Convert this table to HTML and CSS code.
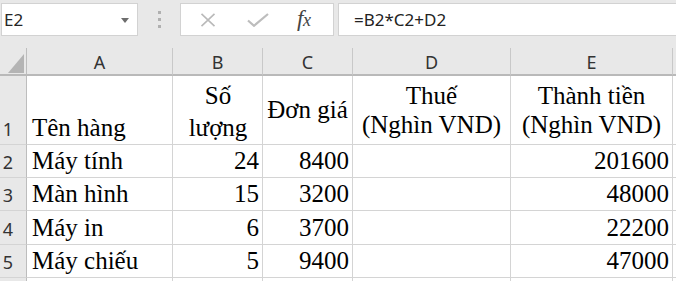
FILE: index.html
```html
<!DOCTYPE html>
<html lang="vi">
<head>
<meta charset="utf-8">
<title>Excel</title>
<link rel="stylesheet" href="styles.css">
</head>
<body>
<div class="app">
  <div class="fbar">
    <div class="namebox">
      <span class="name">E2</span>
      <svg class="dd" width="8" height="5" viewBox="0 0 8 5"><path d="M0 0H8L4 5Z" fill="#6d6d6d"/></svg>
    </div>
    <div class="dots"><i></i><i></i><i></i></div>
    <div class="iconbox">
      <svg class="ic" width="16" height="14" viewBox="0 0 16 14"><path d="M1.5 0.8L14.5 13.2M14.5 0.8L1.5 13.2" stroke="#b9b9b9" stroke-width="1.6" fill="none"/></svg>
      <svg class="ic" width="22" height="14" viewBox="0 0 22 14"><path d="M1 7.5L7 12.8L21 1" stroke="#bdbdbd" stroke-width="2.2" fill="none"/></svg>
      <span class="fx"><span class="f">f</span><span class="x">x</span></span>
    </div>
    <div class="formula">=B2*C2+D2</div>
  </div>
  <div class="sheet">
    <div class="corner"><span class="tri"></span></div>
    <div class="ch">A</div>
    <div class="ch">B</div>
    <div class="ch">C</div>
    <div class="ch">D</div>
    <div class="ch">E</div>
    <div class="ch last"></div>

    <div class="rh">1</div>
    <div class="c left bottom">Tên hàng</div>
    <div class="c center bottom tall">Số<br>lượng</div>
    <div class="c center middle">Đơn giá</div>
    <div class="c center middle">Thuế<br>(Nghìn VND)</div>
    <div class="c center middle">Thành tiền<br>(Nghìn VND)</div>
    <div class="c last"></div>

    <div class="rh">2</div>
    <div class="c left bottom">Máy tính</div>
    <div class="c right bottom">24</div>
    <div class="c right bottom">8400</div>
    <div class="c"></div>
    <div class="c right bottom">201600</div>
    <div class="c last"></div>

    <div class="rh">3</div>
    <div class="c left bottom">Màn hình</div>
    <div class="c right bottom">15</div>
    <div class="c right bottom">3200</div>
    <div class="c"></div>
    <div class="c right bottom">48000</div>
    <div class="c last"></div>

    <div class="rh">4</div>
    <div class="c left bottom">Máy in</div>
    <div class="c right bottom">6</div>
    <div class="c right bottom">3700</div>
    <div class="c"></div>
    <div class="c right bottom">22200</div>
    <div class="c last"></div>

    <div class="rh">5</div>
    <div class="c left bottom">Máy chiếu</div>
    <div class="c right bottom">5</div>
    <div class="c right bottom">9400</div>
    <div class="c"></div>
    <div class="c right bottom">47000</div>
    <div class="c last"></div>

    <div class="rh"></div>
    <div class="c"></div>
    <div class="c"></div>
    <div class="c"></div>
    <div class="c"></div>
    <div class="c"></div>
    <div class="c last"></div>
  </div>
</div>
</body>
</html>
```
FILE: styles.css
```css
* { box-sizing: border-box; }
html, body { margin: 0; padding: 0; }
body {
  width: 676px;
  height: 281px;
  overflow: hidden;
  background: #e8e8e8;
  font-family: "Noto Sans", "Open Sans", sans-serif;
}
.app { display: flex; flex-direction: column; }

.fbar {
  height: 48px;
  display: flex;
  align-items: flex-start;
  padding-top: 3px;
}
.namebox {
  margin-left: 1px;
  width: 137px;
  height: 33px;
  background: #fff;
  border: 1px solid #d2d2d2;
  display: flex;
  align-items: center;
  justify-content: space-between;
  padding: 0 8px 0 2px;
}
.name { font-size: 17px; color: #262626; line-height: 1; }
.dd { margin-top: 1px; }
.dots {
  width: 42px;
  height: 33px;
  display: flex;
  flex-direction: column;
  align-items: center;
  justify-content: center;
  gap: 4px;
}
.dots i {
  display: block;
  width: 3px;
  height: 3px;
  background: #b0b0b0;
}
.iconbox {
  width: 154px;
  height: 33px;
  background: #fff;
  border: 1px solid #d2d2d2;
  display: flex;
  align-items: center;
  padding-left: 19px;
  gap: 0;
}
.iconbox .ic:first-child { margin-right: 31px; }
.iconbox .ic:nth-child(2) { margin-right: 28px; }
.fx {
  font-family: "Liberation Serif", serif;
  font-style: italic;
  color: #444;
  line-height: 1;
  margin-top: -2px;
  letter-spacing: -0.5px;
}
.fx .f { font-size: 23px; }
.fx .x { font-size: 18px; }
.formula {
  margin-left: 4px;
  flex: 1;
  height: 33px;
  background: #fff;
  border: 1px solid #d2d2d2;
  border-right: none;
  font-size: 17px;
  color: #222;
  padding-left: 15px;
  display: flex;
  align-items: center;
}

.sheet {
  display: grid;
  grid-template-columns: 27px 146px 90px 90px 158px 162px 3px;
  grid-template-rows: 28px 69px 33px 33px 34px 33px 10px;
  background: #fff;
}
.corner, .ch, .rh {
  background: #e8e8e8;
  color: #333;
}
.corner {
  border-right: 1px solid #bdbdbd;
  border-bottom: 2px solid #b9b9b9;
  position: relative;
}
.tri {
  position: absolute;
  right: 2px;
  bottom: 1px;
  width: 0;
  height: 0;
  border-left: 16px solid transparent;
  border-bottom: 19px solid #b4b4b4;
}
.ch {
  border-right: 1px solid #c8c8c8;
  border-bottom: 2px solid #b9b9b9;
  display: flex;
  align-items: center;
  justify-content: center;
  font-size: 18px;
  padding-top: 1px;
}
.ch.last { border-right: none; }
.rh {
  border-right: 1px solid #bdbdbd;
  border-bottom: 1px solid #d4d4d4;
  font-size: 18px;
  display: flex;
  align-items: flex-end;
  justify-content: center;
  padding-right: 10px;
  padding-bottom: 3px;
  line-height: 24px;
}
.c {
  border-right: 1px solid #d4d4d4;
  border-bottom: 1px solid #d4d4d4;
  font-family: "Liberation Serif", "Times New Roman", serif;
  font-size: 25px;
  line-height: 29px;
  color: #000;
  display: flex;
  flex-direction: column;
  padding: 0 4px 2px 5px;
  white-space: nowrap;
}
.c.last { border-right: none; }
.left { align-items: flex-start; text-align: left; }
.right { align-items: flex-end; text-align: right; padding-right: 3px; }
.center { align-items: center; text-align: center; }
.bottom { justify-content: flex-end; }
.middle { justify-content: center; padding: 0 0 1px 0; }
.tall { line-height: 32px; padding-bottom: 0; }
```
